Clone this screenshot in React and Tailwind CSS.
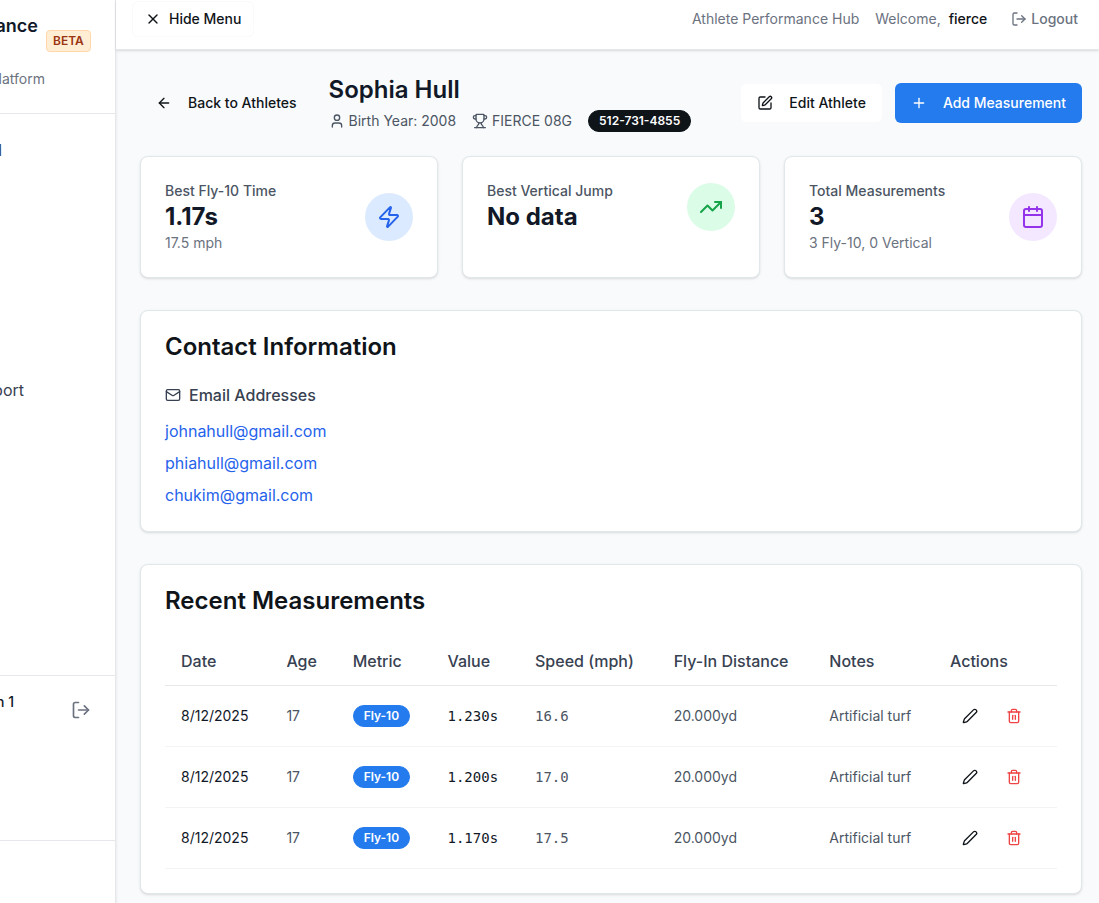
import React from "react";
import { X, LogOut, ArrowLeft, User, Trophy, SquarePen, Plus, Zap, TrendingUp, Calendar, Mail, Pen, Trash2 } from "lucide-react";

const card = "rounded-lg border border-[#e1e8ec] bg-white text-[#0f1419] shadow-sm";

function Stat({ label, value, note, tint, children }) {
  return (
    <section className={`${card} p-6`}>
      <div className="flex items-center justify-between">
        <div>
          <p className="text-sm font-medium text-[#4b5563]">{label}</p>
          <p className="text-2xl font-bold text-[#111827]">{value}</p>
          {note && <p className="text-sm text-[#6b7280]">{note}</p>}
        </div>
        <div className={`flex size-12 items-center justify-center rounded-full ${tint}`}>{children}</div>
      </div>
    </section>
  );
}

function Sidebar() {
  return (
    <aside className="flex w-[116px] shrink-0 flex-col overflow-hidden border-r border-gray-200 bg-white shadow-sm">
      <div className="h-[114px] border-b border-gray-200 pt-3">
        <div className="flex items-start gap-2">
          <h1 className="flex w-[38px] justify-end text-lg/7 font-semibold text-[#111827]">ance</h1>
          <span className="mt-[18px] rounded border border-orange-200 bg-orange-100 px-1.5 py-0.5 text-xs font-semibold text-[#9a3412]">BETA</span>
        </div>
        <p className="mt-[17px] flex w-[45px] justify-end text-sm text-[#6b7280]">latform</p>
      </div>
      <nav className="flex grow flex-col items-start pt-6 text-base text-[#374151]">
        <a href="#dashboard" className="flex w-0.5 justify-end">d</a>
        <a href="#import" className="mt-54 flex w-6 justify-end">port</a>
      </nav>
      <div className="flex h-[165px] items-start justify-between border-t border-gray-200 pt-4 pr-6">
        <span className="flex w-3.5 justify-end text-sm font-medium whitespace-nowrap text-[#111827]">n 1</span>
        <button aria-label="Log out" className="mt-2 text-[#6b7280]"><LogOut size={20} /></button>
      </div>
      <div className="h-[63px] border-t border-gray-200" />
    </aside>
  );
}

const rows = [
  ["1.230s", "16.6"],
  ["1.200s", "17.0"],
  ["1.170s", "17.5"],
];

export default function App() {
  return (
    <div className="flex min-h-screen overflow-x-hidden bg-gray-50 font-['Inter',sans-serif] text-[#0f1419]">
      <Sidebar />
      <div className="min-w-0 grow">
        <header className="flex h-[50px] items-start justify-between border-b border-gray-200 bg-white pt-px pr-[9px] pl-4 shadow-sm">
          <button className="flex h-9 items-center gap-2 rounded-md border border-gray-50 px-3 text-sm font-medium">
            <X size={16} />Hide Menu
          </button>
          <div className="flex h-9 items-center text-sm text-[#6b7280]">
            <span>Athlete Performance Hub</span>
            <span className="ml-4">Welcome,</span>
            <span className="ml-2 font-medium text-[#0f1419]">fierce</span>
            <button className="ml-3 flex h-9 items-center gap-1 px-3 font-medium">
              <LogOut size={16} />Logout
            </button>
          </div>
        </header>

        <main className="pt-6 pr-[17px] pb-2 pl-6">
          <div className="mb-6 flex items-center justify-between">
            <div className="flex items-center gap-4">
              <button className="flex h-10 items-center gap-4 px-4 text-sm font-medium">
                <ArrowLeft size={16} />Back to Athletes
              </button>
              <div>
                <h1 className="text-2xl font-semibold text-[#111827]">Sophia Hull</h1>
                <div className="mt-1 flex items-center gap-4 text-sm text-[#4b5563]">
                  <span className="flex items-center gap-1"><User size={16} />Birth Year: 2008</span>
                  <span className="flex items-center gap-1"><Trophy size={16} />FIERCE 08G</span>
                  <span className="rounded-full border border-[#0f1419] bg-[#0f1419] px-2.5 py-0.5 text-xs font-semibold text-white">512-731-4855</span>
                </div>
              </div>
            </div>
            <div className="flex gap-3">
              <button className="flex h-10 items-center gap-4 rounded-md border border-gray-50 bg-white px-4 text-sm font-medium">
                <SquarePen size={16} />Edit Athlete
              </button>
              <button className="flex h-10 items-center gap-4 rounded-md bg-[#247bed] px-4 text-sm font-medium text-white">
                <Plus size={16} />Add Measurement
              </button>
            </div>
          </div>

          <div className="mb-8 grid grid-cols-3 gap-6">
            <Stat label="Best Fly-10 Time" value="1.17s" note="17.5 mph" tint="bg-blue-100 text-[#2563eb]"><Zap size={24} /></Stat>
            <Stat label="Best Vertical Jump" value="No data" tint="bg-green-100 text-[#16a34a]"><TrendingUp size={24} /></Stat>
            <Stat label="Total Measurements" value="3" note="3 Fly-10, 0 Vertical" tint="bg-purple-100 text-[#9333ea]"><Calendar size={24} /></Stat>
          </div>

          <section className={`${card} mb-8 p-6`}>
            <h2 className="text-2xl/6 font-semibold">Contact Information</h2>
            <h3 className="mt-6 mb-3 flex items-center gap-2 font-medium text-[#374151]"><Mail size={16} />Email Addresses</h3>
            <div className="flex flex-col items-start gap-2 text-[#2563eb]">
              <a href="mailto:johnahull@gmail.com">johnahull@gmail.com</a>
              <a href="mailto:phiahull@gmail.com">phiahull@gmail.com</a>
              <a href="mailto:chukim@gmail.com">chukim@gmail.com</a>
            </div>
          </section>

          <section className={`${card} p-6`}>
            <h2 className="mb-6 text-2xl/6 font-semibold">Recent Measurements</h2>
            <table className="w-full text-left text-sm">
              <thead>
                <tr className="h-12 border-b border-gray-200 text-base text-[#374151]">
                  {["Date", "Age", "Metric", "Value", "Speed (mph)", "Fly-In Distance", "Notes", "Actions"].map((h) => (
                    <th key={h} className="px-4 font-medium">{h}</th>
                  ))}
                </tr>
              </thead>
              <tbody>
                {rows.map(([value, speed]) => (
                  <tr key={value} className="h-[61px] border-b border-gray-100 text-[#4b5563]">
                    <td className="px-4 text-[#111827]">8/12/2025</td>
                    <td className="px-4">17</td>
                    <td className="px-4">
                      <span className="inline-flex rounded-full border border-[#247bed] bg-[#247bed] px-2.5 py-0.5 text-xs font-semibold text-white">Fly-10</span>
                    </td>
                    <td className="px-4 font-['DejaVu_Sans_Mono',monospace] text-[#111827]">{value}</td>
                    <td className="px-4 font-['DejaVu_Sans_Mono',monospace]">{speed}</td>
                    <td className="px-4">20.000yd</td>
                    <td className="px-4">Artificial turf</td>
                    <td className="px-4">
                      <div className="flex gap-1">
                        <button aria-label="Edit measurement" className="flex h-9 items-center px-3 text-[#0f1419]"><Pen size={16} /></button>
                        <button aria-label="Delete measurement" className="flex h-9 items-center px-3 text-[#ef4444]"><Trash2 size={16} /></button>
                      </div>
                    </td>
                  </tr>
                ))}
              </tbody>
            </table>
          </section>
        </main>
      </div>
    </div>
  );
}
